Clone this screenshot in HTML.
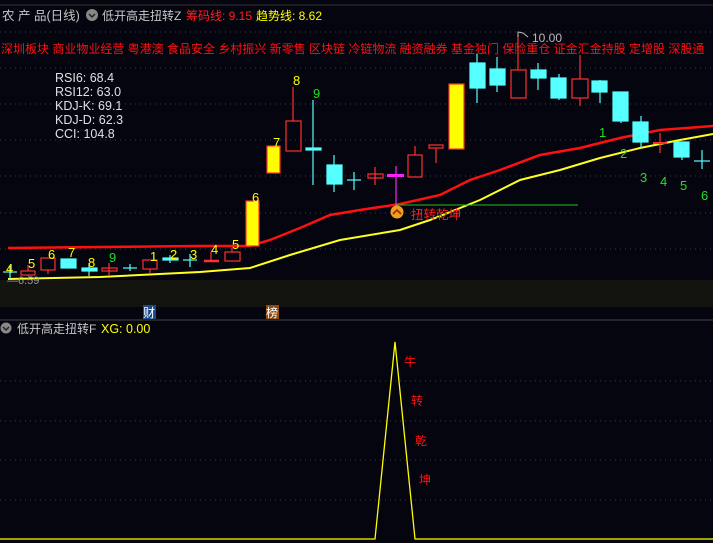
<!DOCTYPE html>
<html><head><meta charset="utf-8"><style>
body{margin:0;background:#05050f;}
svg{display:block;font-family:"Liberation Sans","Noto Sans CJK SC",sans-serif;}
</style></head><body>
<svg width="713" height="543" viewBox="0 0 713 543" xmlns="http://www.w3.org/2000/svg">
<rect width="713" height="543" fill="#05050f"/>
<rect x="0" y="280" width="713" height="27" fill="#13130f"/>
<g stroke="#3a3a44" stroke-dasharray="1,4" stroke-width="1">
<line x1="0" y1="32" x2="713" y2="32"/><line x1="0" y1="68" x2="713" y2="68"/>
<line x1="0" y1="104" x2="713" y2="104"/><line x1="0" y1="140" x2="713" y2="140"/>
<line x1="0" y1="176" x2="713" y2="176"/><line x1="0" y1="213" x2="713" y2="213"/>
<line x1="0" y1="249" x2="713" y2="249"/>
<line x1="0" y1="381" x2="713" y2="381"/><line x1="0" y1="421" x2="713" y2="421"/>
<line x1="0" y1="460" x2="713" y2="460"/><line x1="0" y1="500" x2="713" y2="500"/>
</g>
<line x1="0" y1="5" x2="713" y2="5" stroke="#333" />
<line x1="0" y1="320" x2="713" y2="320" stroke="#444"/>
<!-- header -->
<text x="2" y="20" font-size="12.5" fill="#c8c8c8">农 产 品(日线)</text>
<circle cx="92" cy="15" r="6" fill="#888"/><path d="M89 14l3 3 3-3" stroke="#222" fill="none" stroke-width="1.5"/>
<text x="102" y="20" font-size="12" fill="#c8c8c8">低开高走扭转Z</text>
<text x="186" y="20" font-size="12" fill="#ff2020">筹码线: 9.15</text>
<text x="256" y="20" font-size="12" fill="#ffff00">趋势线: 8.62</text>
<text x="1" y="53" font-size="12" fill="#ff1010">深圳板块 商业物业经营 粤港澳 食品安全 乡村振兴 新零售 区块链 冷链物流  融资融券 基金独门 保险重仓 证金汇金持股 定增股 深股通</text>
<g font-size="12.5" fill="#e0e0e0">
<text x="55" y="82">RSI6: 68.4</text><text x="55" y="96">RSI12: 63.0</text>
<text x="55" y="110">KDJ-K: 69.1</text><text x="55" y="124">KDJ-D: 62.3</text>
<text x="55" y="138">CCI: 104.8</text></g>
<!-- MA lines -->
<polyline fill="none" stroke="#ff1010" stroke-width="2.5" points="8,248 100,247 200,246 250,246 270,240 300,228 330,215 360,210 400,204 440,195 470,180 500,170 540,155 580,148 620,138 660,130 713,126"/>
<polyline fill="none" stroke="#ffff20" stroke-width="2" points="8,279 100,277 200,272 250,268 290,255 340,240 400,230 430,220 480,200 520,180 560,170 600,158 640,148 680,140 713,134"/>
<!-- candles -->
<g stroke-width="1.2">
<g stroke="#55ffff" fill="#55ffff">
<line x1="3" y1="272" x2="17" y2="272"/><line x1="10" y1="266" x2="10" y2="280"/>
<rect x="61" y="259" width="15" height="9"/>
<line x1="89" y1="263" x2="89" y2="276"/><rect x="82" y="268" width="15" height="3"/>
<line x1="123" y1="268" x2="137" y2="268"/><line x1="130" y1="264" x2="130" y2="271"/>
<rect x="163" y="258" width="15" height="2"/><line x1="170" y1="255" x2="170" y2="263"/>
<line x1="183" y1="260" x2="197" y2="260"/><line x1="190" y1="254" x2="190" y2="267"/>
<line x1="313" y1="100" x2="313" y2="185"/><rect x="306" y="148" width="15" height="2"/>
<line x1="334" y1="155" x2="334" y2="192"/><rect x="327" y="165" width="15" height="19"/>
<line x1="347" y1="180" x2="361" y2="180"/><line x1="354" y1="172" x2="354" y2="190"/>
<line x1="477" y1="54" x2="477" y2="103"/><rect x="470" y="63" width="15" height="25"/>
<line x1="497" y1="57" x2="497" y2="92"/><rect x="490" y="69" width="15" height="16"/>
<line x1="538" y1="63" x2="538" y2="90"/><rect x="531" y="70" width="15" height="8"/>
<line x1="559" y1="74" x2="559" y2="100"/><rect x="551" y="78" width="15" height="20"/>
<line x1="600" y1="80" x2="600" y2="103"/><rect x="592" y="81" width="15" height="11"/>
<line x1="621" y1="92" x2="621" y2="123"/><rect x="613" y="92" width="15" height="29"/>
<line x1="641" y1="116" x2="641" y2="148"/><rect x="633" y="122" width="15" height="20"/>
<rect x="674" y="142" width="15" height="15"/><line x1="682" y1="142" x2="682" y2="160"/>
<line x1="694" y1="161" x2="710" y2="161"/><line x1="702" y1="150" x2="702" y2="169"/>
</g>
<g stroke="#ff3030" fill="none">
<line x1="28" y1="265" x2="28" y2="276"/><rect x="21" y="271" width="14" height="4" fill="#05050f"/>
<line x1="48" y1="270" x2="48" y2="274"/><rect x="41" y="258" width="14" height="12"/>
<rect x="102" y="268" width="15" height="3"/><line x1="109" y1="263" x2="109" y2="275"/>
<line x1="150" y1="269" x2="150" y2="273"/><rect x="143" y="260" width="14" height="9"/>
<line x1="204" y1="261" x2="219" y2="261" stroke-width="2.5"/><line x1="211" y1="252" x2="211" y2="261"/>
<rect x="225" y="252" width="15" height="9"/><line x1="232" y1="248" x2="232" y2="252"/>
<rect x="246" y="201" width="13" height="45" fill="#ffff00"/>
<rect x="267" y="146" width="13" height="27" fill="#ffff00"/>
<line x1="293" y1="87" x2="293" y2="121"/><rect x="286" y="121" width="15" height="30"/>
<line x1="375" y1="167" x2="375" y2="185"/><rect x="368" y="174" width="15" height="4"/>
<line x1="415" y1="146" x2="415" y2="155"/><rect x="408" y="155" width="14" height="22"/>
<line x1="436" y1="148" x2="436" y2="163"/><rect x="429" y="145" width="14" height="3"/>
<rect x="449" y="84" width="15" height="65" fill="#ffff00"/>
<line x1="518" y1="34" x2="518" y2="70"/><rect x="511" y="70" width="15" height="28"/>
<line x1="580" y1="55" x2="580" y2="79"/><line x1="580" y1="98" x2="580" y2="106"/><rect x="572" y="79" width="16" height="19"/>
<line x1="653" y1="143" x2="667" y2="143" stroke-width="2"/><line x1="660" y1="133" x2="660" y2="153"/>
</g>
<line x1="396" y1="166" x2="396" y2="206" stroke="#ff20ff"/><rect x="387" y="174" width="17" height="3" fill="#ff20ff"/>
</g>
<line x1="395" y1="205" x2="578" y2="205" stroke="#20c020"/>
<circle cx="397" cy="212" r="6.5" fill="#f0a020"/><path d="M393 214l4-4 4 4" stroke="#a03000" stroke-width="1.8" fill="none"/>
<text x="411" y="219" font-size="12.5" fill="#ff2020">扭转乾坤</text>
<path d="M518 37 l0 -5 l5 1 l5 4" stroke="#bbb" fill="none"/><text x="532" y="42" font-size="12" fill="#bbb">10.00</text>
<text x="7" y="284" font-size="11" fill="#999">—6.59</text>
<!-- labels -->
<g font-size="13" fill="#ffff00">
<text x="6" y="273">4</text><text x="28" y="268">5</text><text x="48" y="259">6</text><text x="68" y="257">7</text>
<text x="88" y="267">8</text><text x="150" y="261">1</text><text x="170" y="259">2</text><text x="190" y="259">3</text>
<text x="211" y="254">4</text><text x="232" y="249">5</text><text x="252" y="202">6</text><text x="273" y="147">7</text>
<text x="293" y="85">8</text></g>
<g font-size="13" fill="#20e020">
<text x="109" y="262">9</text><text x="313" y="98">9</text>
<text x="599" y="137">1</text><text x="620" y="158">2</text><text x="640" y="182">3</text>
<text x="660" y="186">4</text><text x="680" y="190">5</text><text x="701" y="200">6</text></g>
<rect x="143" y="305" width="13" height="14" fill="#1a4a8a"/><text x="143" y="317" font-size="12" fill="#fff">财</text>
<rect x="266" y="305" width="13" height="14" fill="#8a4a10"/><text x="266" y="317" font-size="12" fill="#fff">榜</text>
<!-- lower panel -->
<circle cx="6" cy="328" r="5.5" fill="#888"/><path d="M3 327l3 3 3-3" stroke="#222" fill="none" stroke-width="1.5"/>
<text x="17" y="333" font-size="12" fill="#c8c8c8">低开高走扭转F</text>
<text x="101" y="333" font-size="12.5" fill="#ffff00">XG: 0.00</text>
<polyline fill="none" stroke="#ffff00" stroke-width="1.3" points="0,539 375,539 395,342 415,539 713,539"/>
<g font-size="12" fill="#ff1010"><text x="404" y="366">牛</text><text x="411" y="405">转</text><text x="415" y="445">乾</text><text x="419" y="484">坤</text></g>
</svg>
</body></html>
